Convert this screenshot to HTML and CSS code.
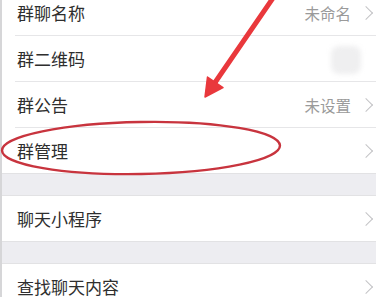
FILE: index.html
```html
<!DOCTYPE html>
<html lang="zh">
<head>
<meta charset="utf-8">
<link rel="stylesheet" href="styles.css">
</head>
<body>
<div class="page">
  <div class="group first">
    <div class="row"><span class="label">群聊名称</span><span class="value">未命名</span><span class="chev"></span></div>
    <div class="row"><span class="label">群二维码</span><span class="qr"></span></div>
    <div class="row"><span class="label">群公告</span><span class="value">未设置</span><span class="chev"></span></div>
    <div class="row last"><span class="label">群管理</span><span class="chev"></span></div>
  </div>
  <div class="gap"></div>
  <div class="group">
    <div class="row last"><span class="label">聊天小程序</span><span class="chev"></span></div>
  </div>
  <div class="gap"></div>
  <div class="group">
    <div class="row last"><span class="label">查找聊天内容</span><span class="chev"></span></div>
  </div>
  <svg class="overlay" width="376" height="297" viewBox="0 0 376 297">
    <ellipse cx="141" cy="148" rx="139" ry="26" fill="none" stroke="#c8343e" stroke-width="2.4" transform="rotate(-1 141 148)"/>
    <line x1="273" y1="-2" x2="214" y2="84" stroke="#e9383c" stroke-width="5" stroke-linecap="round"/>
    <polygon points="205,97 207.5,77 223,87.5" fill="#e9383c" stroke="#e9383c" stroke-width="1.5" stroke-linejoin="round"/>
  </svg>
</div>
</body>
</html>
```
FILE: styles.css
```css
html, body {
  margin: 0;
  padding: 0;
  background: #ffffff;
}
.page {
  position: relative;
  width: 376px;
  height: 297px;
  overflow: hidden;
  background: #ededf1;
  font-family: "Noto Sans CJK SC", "Noto Sans", sans-serif;
}
.page::before {
  content: "";
  position: absolute;
  left: 0;
  top: 0;
  bottom: 0;
  width: 2px;
  background: #d6d6d8;
  z-index: 2;
}
.group {
  background: #ffffff;
  padding-left: 15px;
  display: flex;
  flex-direction: column;
  border-bottom: 1px solid #e2e2e4;
}
.group + .gap + .group {
  border-top: 1px solid #e2e2e4;
}
.first {
  margin-top: -10px;
}
.row {
  height: 45px;
  display: flex;
  align-items: center;
  border-bottom: 1px solid #e6e6e8;
  padding-right: 5px;
}
.row.last {
  border-bottom: none;
}
.label {
  flex: 1;
  font-size: 17px;
  color: #2e2e2e;
  padding-left: 2px;
}
.value {
  font-size: 15.5px;
  color: #9a9a9a;
  margin-right: 10px;
}
.chev {
  width: 9px;
  height: 9px;
  border-top: 1.5px solid #c3c3c6;
  border-right: 1.5px solid #c3c3c6;
  transform: rotate(45deg);
}
.qr {
  width: 30px;
  height: 28px;
  border-radius: 8px;
  background: #efeff0;
  filter: blur(2.5px);
  margin-right: 10px;
  margin-top: 2px;
}
.gap {
  height: 21px;
}
.overlay {
  position: absolute;
  left: 0;
  top: 0;
  z-index: 3;
}
```
